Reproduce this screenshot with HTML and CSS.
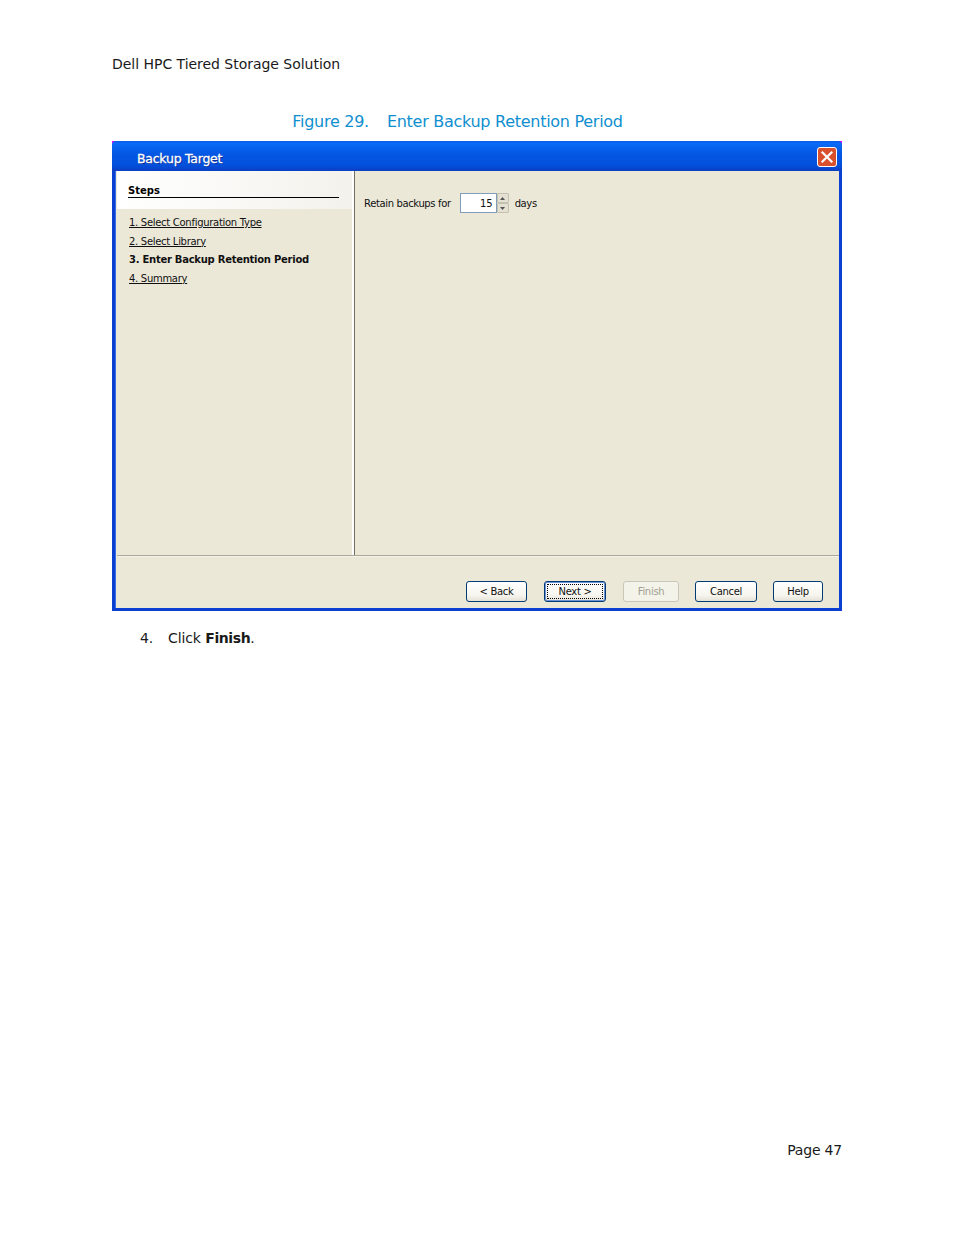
FILE: index.html
```html
<!DOCTYPE html>
<html lang="en">
<head>
<meta charset="utf-8">
<title>Dell HPC Tiered Storage Solution</title>
<link rel="stylesheet" href="styles.css">
</head>
<body>
<main class="page">
  <header class="doc-header">Dell HPC Tiered Storage Solution</header>
  <h2 class="caption"><span class="fig-no">Figure 29.</span><span>Enter Backup Retention Period</span></h2>
  <section class="window">
    <div class="titlebar">
      <span class="title">Backup Target</span>
      <span class="close"><svg viewBox="0 0 20 20" width="20" height="20"><rect x="0.5" y="0.5" width="19" height="19" rx="2.5" fill="#d9502c" stroke="#fff"/><path d="M5.5 5.5l9 9M14.500 5.500l-9 9" stroke="#fff" stroke-width="2.200" stroke-linecap="square"/></svg></span>
    </div>
    <div class="client">
      <div class="panes">
        <aside class="steps">
          <div class="steps-head"><div class="steps-title">Steps</div></div>
          <ol class="step-list">
            <li><a>1. Select Configuration Type</a></li>
            <li><a>2. Select Library</a></li>
            <li class="current">3. Enter Backup Retention Period</li>
            <li><a>4. Summary</a></li>
          </ol>
        </aside>
        <div class="content">
          <div class="form-row">
            <span class="lbl">Retain backups for</span>
            <span class="spinner">
              <span class="spin-val">15</span>
              <span class="spin-btns">
                <span class="spin-btn"><svg viewBox="0 0 5 3" width="5" height="3"><path d="M0 3h5L2.500 0z" fill="#555"/></svg></span>
                <span class="spin-btn"><svg viewBox="0 0 5 3" width="5" height="3"><path d="M0 0h5L2.500 3z" fill="#555"/></svg></span>
              </span>
            </span>
            <span class="lbl days">days</span>
          </div>
        </div>
      </div>
      <div class="buttons">
        <span class="btn b-back">&lt; Back</span>
        <span class="btn b-next"><span class="focus">Next &gt;</span></span>
        <span class="btn b-finish disabled">Finish</span>
        <span class="btn b-cancel">Cancel</span>
        <span class="btn b-help">Help</span>
      </div>
    </div>
  </section>
  <p class="instruction"><span class="num">4.</span><span>Click <b>Finish</b>.</span></p>
  <footer class="doc-footer">Page 47</footer>
</main>
</body>
</html>
```
FILE: styles.css
```css
* { box-sizing: border-box; }
html, body { margin: 0; padding: 0; background: #fff; }
body { width: 954px; height: 1235px; overflow: hidden; font-family: "DejaVu Sans", "Open Sans", sans-serif; color: #1a1a1a; }
.page { width: 954px; height: 1235px; padding: 55px 112px 0; display: flex; flex-direction: column; }
.doc-header { font-size: 14px; letter-spacing: -0.030px; line-height: 18px; height: 18px; }
.caption { margin: 39px 0 0; height: 20px; font-size: 16px; letter-spacing: -0.280px; line-height: 20px; font-weight: 400; color: #0f8fd0; display: flex; justify-content: center; gap: 18px; padding-right: 39px; }
.window { margin-top: 9px; width: 730px; height: 470px; background: linear-gradient(#f0f 0 5px, #0a3fd0 5px); display: flex; flex-direction: column; padding: 0 3px 3px 3px; }
.titlebar { height: 30px; flex: none; margin: 0 -3px; padding: 2px 5px 0 25px; display: flex; align-items: center; justify-content: space-between; border-radius: 4px 4px 0 0; background: linear-gradient(#0a5be8 0, #0a6cf6 8%, #0458e4 40%, #0350dc 80%, #0a3fc4 100%); }
.title { font-size: 12.500px; letter-spacing: -0.250px; color: #fff; text-shadow: 1px 1px 0 #0a2a90; -webkit-text-stroke: 0.300px #fff; margin-top: 2px; }
.close { width: 20px; height: 20px; display: block; }
.close svg { display: block; }
.client { flex: 1; min-height: 0; background: #ebe8d8; border-left: 1px solid #3a6ee8; display: flex; flex-direction: column; }
.panes { height: 385px; flex: none; display: flex; border-bottom: 1px solid #aca899; box-shadow: 0 1px 0 #f6f4ea; margin-left: 1px; }
.steps { width: 237px; flex: none; border-right: 2px solid #fff; }
.steps-head { height: 38px; padding: 13px 13px 0 11px; background: linear-gradient(90deg, #fff, #f3f2ec); }
.steps-title { font-size: 10px; font-weight: 700; line-height: 14px; height: 13px; border-bottom: 1px solid #000; color: #000; box-sizing: content-box; }
.step-list { list-style: none; margin: 0; padding: 5px 0 0 12px; font-size: 10px; line-height: 18.600px; color: #111; }
.step-list li { height: 18.600px; letter-spacing: -0.290px; }
.step-list a { text-decoration: underline; }
.step-list .current { font-weight: 700; letter-spacing: -0.260px; }
.content { flex: 1; border-left: 1px solid #716f64; padding: 22px 0 0 9px; }
.form-row { display: flex; align-items: center; height: 20px; font-size: 10px; color: #111; }
.lbl { letter-spacing: -0.370px; }
.spinner { margin-left: 9px; display: flex; align-items: stretch; height: 20px; }
.spin-val { width: 37px; border: 1px solid #7f9db9; background: #fff; text-align: right; padding-right: 3px; line-height: 19px; font-size: 10px; }
.spin-btns { width: 12px; display: flex; flex-direction: column; }
.spin-btn { height: 10px; display: flex; align-items: center; justify-content: center; background: #e4e1d2; border: 1px solid #c4c1b0; border-radius: 1px; }
.spin-btn svg { display: block; }
.days { margin-left: 6px; }
.buttons { flex: 1; display: flex; align-items: flex-start; padding: 25px 0 0 350px; font-size: 10px; color: #111; }
.btn { height: 21px; display: flex; align-items: center; justify-content: center; border: 1px solid #003c74; border-radius: 3px; background: linear-gradient(#fff, #f6f5ee 70%, #e4e1d6); letter-spacing: -0.300px; }
.b-back { width: 61px; }
.b-next { width: 62px; margin-left: 17px; padding: 2px; box-shadow: inset 0 0 0 1px #6d92d8; }
.focus { flex: 1; align-self: stretch; display: flex; align-items: center; justify-content: center; border: 1px dotted #000; }
.b-finish { width: 56px; margin-left: 17px; }
.disabled { border-color: #cac7ba; color: #a19f92; background: #f4f3ea; }
.b-cancel { width: 62px; margin-left: 16px; }
.b-help { width: 50px; margin-left: 16px; }
.instruction { margin: 18px 0 0 28px; font-size: 14px; letter-spacing: -0.100px; line-height: 18px; height: 18px; display: flex; }
.num { width: 28px; }
.instruction b { font-weight: 700; letter-spacing: -0.400px; }
.doc-footer { margin-top: 494px; font-size: 14px; letter-spacing: -0.200px; line-height: 18px; text-align: right; }
```
